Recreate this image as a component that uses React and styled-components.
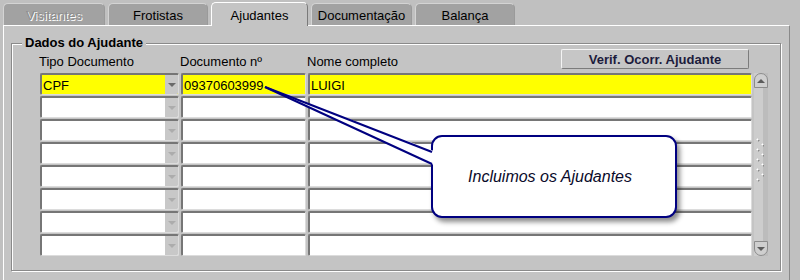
import React from 'react'
import styled, { createGlobalStyle } from 'styled-components'

const GlobalStyle = createGlobalStyle`
  html, body {
    margin: 0;
    padding: 0;
    background: #c0c0c0;
    overflow: hidden;
    font-family: "Liberation Sans", Arial, sans-serif;
    font-size: 13px;
  }
`

const Screen = styled.div`
  position: relative;
  width: 800px;
  height: 280px;
  overflow: hidden;
`

const TabBar = styled.div`
  display: flex;
  align-items: flex-end;
  gap: 3px;
  height: 25px;
  padding: 0 3px;
`

const Tab = styled.div`
  position: relative;
  z-index: ${(p) => (p.$active ? 1 : 0)};
  box-sizing: border-box;
  width: ${(p) => p.$w}px;
  height: ${(p) => (p.$active ? 24 : 22)}px;
  margin-bottom: ${(p) => (p.$active ? -1 : 0)}px;
  display: flex;
  align-items: center;
  justify-content: center;
  background: ${(p) => (p.$active ? '#c4c4c4' : '#a2a2a2')};
  border-top: 1px solid ${(p) => (p.$active ? '#ffffff' : '#d4d4d4')};
  border-left: 1px solid ${(p) => (p.$active ? '#ffffff' : '#d4d4d4')};
  border-right: 1px solid ${(p) => (p.$active ? '#7a7a7a' : '#9a9a9a')};
  border-radius: 5px 5px 0 0;
  color: ${(p) => (p.$disabled ? '#8c8c8c' : '#000')};
  text-shadow: ${(p) => (p.$disabled ? '1px 1px 0 #fff' : 'none')};
  padding-top: 1px;
`

const Panel = styled.div`
  box-sizing: border-box;
  margin: 0 10px 0 3px;
  height: 270px;
  background: #c4c4c4;
  border-top: 1px solid #fff;
  border-left: 1px solid #fff;
  border-right: 1px solid #8a8a8a;
  padding: 17px 8px 0 7px;
`

const GroupBox = styled.div`
  border: 1px solid #8a8a8a;
  box-shadow: inset 1px 1px 0 #fff, 1px 1px 0 #fff;
  padding: 0 12px 14px 28px;
`

const Legend = styled.div`
  display: table;
  margin: -8px 0 0 -18px;
  padding: 0 3px;
  background: #c4c4c4;
  font-weight: bold;
  line-height: 14px;
  color: #000;
`

const Columns = styled.div`
  display: grid;
  grid-template-columns: 139px 125px 444px 14px;
  column-gap: 2px;
`

const HeaderRow = styled(Columns)`
  margin-top: -1px;
  height: 20px;
  align-items: end;
`

const HeaderLabel = styled.div`
  margin-left: -1px;
  line-height: 14px;
  color: #000;
`

const HeaderCell = styled.div`
  display: flex;
  justify-content: space-between;
  align-items: flex-end;
  height: 20px;
`

const Button = styled.div`
  box-sizing: border-box;
  width: 188px;
  height: 20px;
  margin-right: 3px;
  display: flex;
  align-items: center;
  justify-content: center;
  background: #c6c6c6;
  border-top: 1px solid #f4f4f4;
  border-left: 1px solid #f4f4f4;
  border-right: 1px solid #7c7c7c;
  border-bottom: 1px solid #7c7c7c;
  border-radius: 2px;
  font-weight: bold;
  color: #1c1c3c;
`

const Table = styled(Columns)`
  margin-top: 4px;
  grid-template-rows: repeat(8, 22px);
  row-gap: 1px;
`

const Cell = styled.div`
  box-sizing: border-box;
  display: flex;
  align-items: center;
  overflow: hidden;
  background: ${(p) => (p.$current ? '#ffff00' : '#ffffff')};
  border-top: 2px solid #767676;
  border-left: 2px solid #767676;
  border-right: 1px solid #dcdcdc;
  border-bottom: 1px solid #dcdcdc;
  border-radius: 2px;
  padding-left: 1px;
  color: #000;
  white-space: nowrap;
`

const CellText = styled.span`
  flex: 1;
  padding-top: 1px;
`

const DropButton = styled.div`
  align-self: stretch;
  width: 13px;
  display: flex;
  align-items: center;
  justify-content: center;
  background: #c8c8c8;
  &::after {
    content: '';
    border-left: 4px solid transparent;
    border-right: 4px solid transparent;
    border-top: 4px solid ${(p) => (p.$current ? '#6a6a6a' : '#acacac')};
  }
`

const ScrollBar = styled.div`
  grid-column: 4;
  grid-row: 1 / span 8;
  display: flex;
  flex-direction: column;
  background: linear-gradient(90deg, #cdcdcd 0 9px, #bcbcbc 9px);
`

const ScrollButton = styled.div`
  box-sizing: border-box;
  height: 15px;
  display: flex;
  align-items: center;
  justify-content: center;
  background: #cfcfcf;
  border: 1px solid #8c8c8c;
  border-radius: ${(p) => (p.$down ? '0 0 7px 7px' : '7px 7px 0 0')};
  &::after {
    content: '';
    border-left: 4px solid transparent;
    border-right: 4px solid transparent;
    ${(p) => (p.$down ? 'border-top' : 'border-bottom')}: 4px solid #5c5c5c;
  }
`

const Track = styled.div`
  flex: 1;
  display: flex;
  align-items: center;
  justify-content: center;
  padding-bottom: 10px;
`

const Grip = styled.div`
  width: 8px;
  height: 44px;
  margin-right: 2px;
  background-image:
    radial-gradient(circle at 1.5px 1.5px, #ffffff 0 0.9px, transparent 1.1px),
    radial-gradient(circle at 2.5px 2.5px, #8a8a8a 0 0.9px, transparent 1.1px),
    radial-gradient(circle at 6.5px 6.5px, #ffffff 0 0.9px, transparent 1.1px),
    radial-gradient(circle at 7.5px 7.5px, #8a8a8a 0 0.9px, transparent 1.1px);
  background-size: 9px 10px;
`

const Bubble = styled.div`
  position: absolute;
  left: 431px;
  top: 135px;
  box-sizing: border-box;
  width: 246px;
  height: 83px;
  display: flex;
  align-items: center;
  justify-content: center;
  padding-right: 8px;
  background: #fff;
  border: 2px solid #000080;
  border-radius: 11px;
  box-shadow: 3px 4px 5px rgba(0, 0, 0, 0.45);
  font-size: 16px;
  font-style: italic;
  color: #0a0a2a;
`

const Tail = styled.svg`
  position: absolute;
  left: 0;
  top: 0;
  pointer-events: none;
`

const tabs = [
  { label: 'Visitantes', w: 102, disabled: true },
  { label: 'Frotistas', w: 100 },
  { label: 'Ajudantes', w: 97, active: true },
  { label: 'Documentação', w: 101 },
  { label: 'Balança', w: 100 },
]

const rows = [
  { tipo: 'CPF', doc: '09370603999', nome: 'LUIGI' },
  {}, {}, {}, {}, {}, {}, {},
]

export default function App() {
  return (
    <Screen>
      <GlobalStyle />
      <TabBar>
        {tabs.map((t) => (
          <Tab key={t.label} $w={t.w} $active={t.active} $disabled={t.disabled}>
            {t.label}
          </Tab>
        ))}
      </TabBar>
      <Panel>
        <GroupBox>
          <Legend>Dados do Ajudante</Legend>
          <HeaderRow>
            <HeaderLabel>Tipo Documento</HeaderLabel>
            <HeaderLabel>Documento nº</HeaderLabel>
            <HeaderCell>
              <HeaderLabel>Nome completo</HeaderLabel>
              <Button>Verif. Ocorr. Ajudante</Button>
            </HeaderCell>
          </HeaderRow>
          <Table>
            {rows.map((r, i) => (
              <React.Fragment key={i}>
                <Cell $current={i === 0}>
                  <CellText>{r.tipo}</CellText>
                  <DropButton $current={i === 0} />
                </Cell>
                <Cell $current={i === 0}>
                  <CellText>{r.doc}</CellText>
                </Cell>
                <Cell $current={i === 0}>
                  <CellText>{r.nome}</CellText>
                </Cell>
              </React.Fragment>
            ))}
            <ScrollBar>
              <ScrollButton />
              <Track>
                <Grip />
              </Track>
              <ScrollButton $down />
            </ScrollBar>
          </Table>
        </GroupBox>
      </Panel>
      <Bubble>Incluimos os Ajudantes</Bubble>
      <Tail width="800" height="280">
        <polygon points="265,87 434,151 434,165" fill="#fff" />
        <line x1="265" y1="87" x2="432" y2="152" stroke="#000080" strokeWidth="2" />
        <line x1="265" y1="87" x2="432" y2="164" stroke="#000080" strokeWidth="2" />
      </Tail>
    </Screen>
  )
}
